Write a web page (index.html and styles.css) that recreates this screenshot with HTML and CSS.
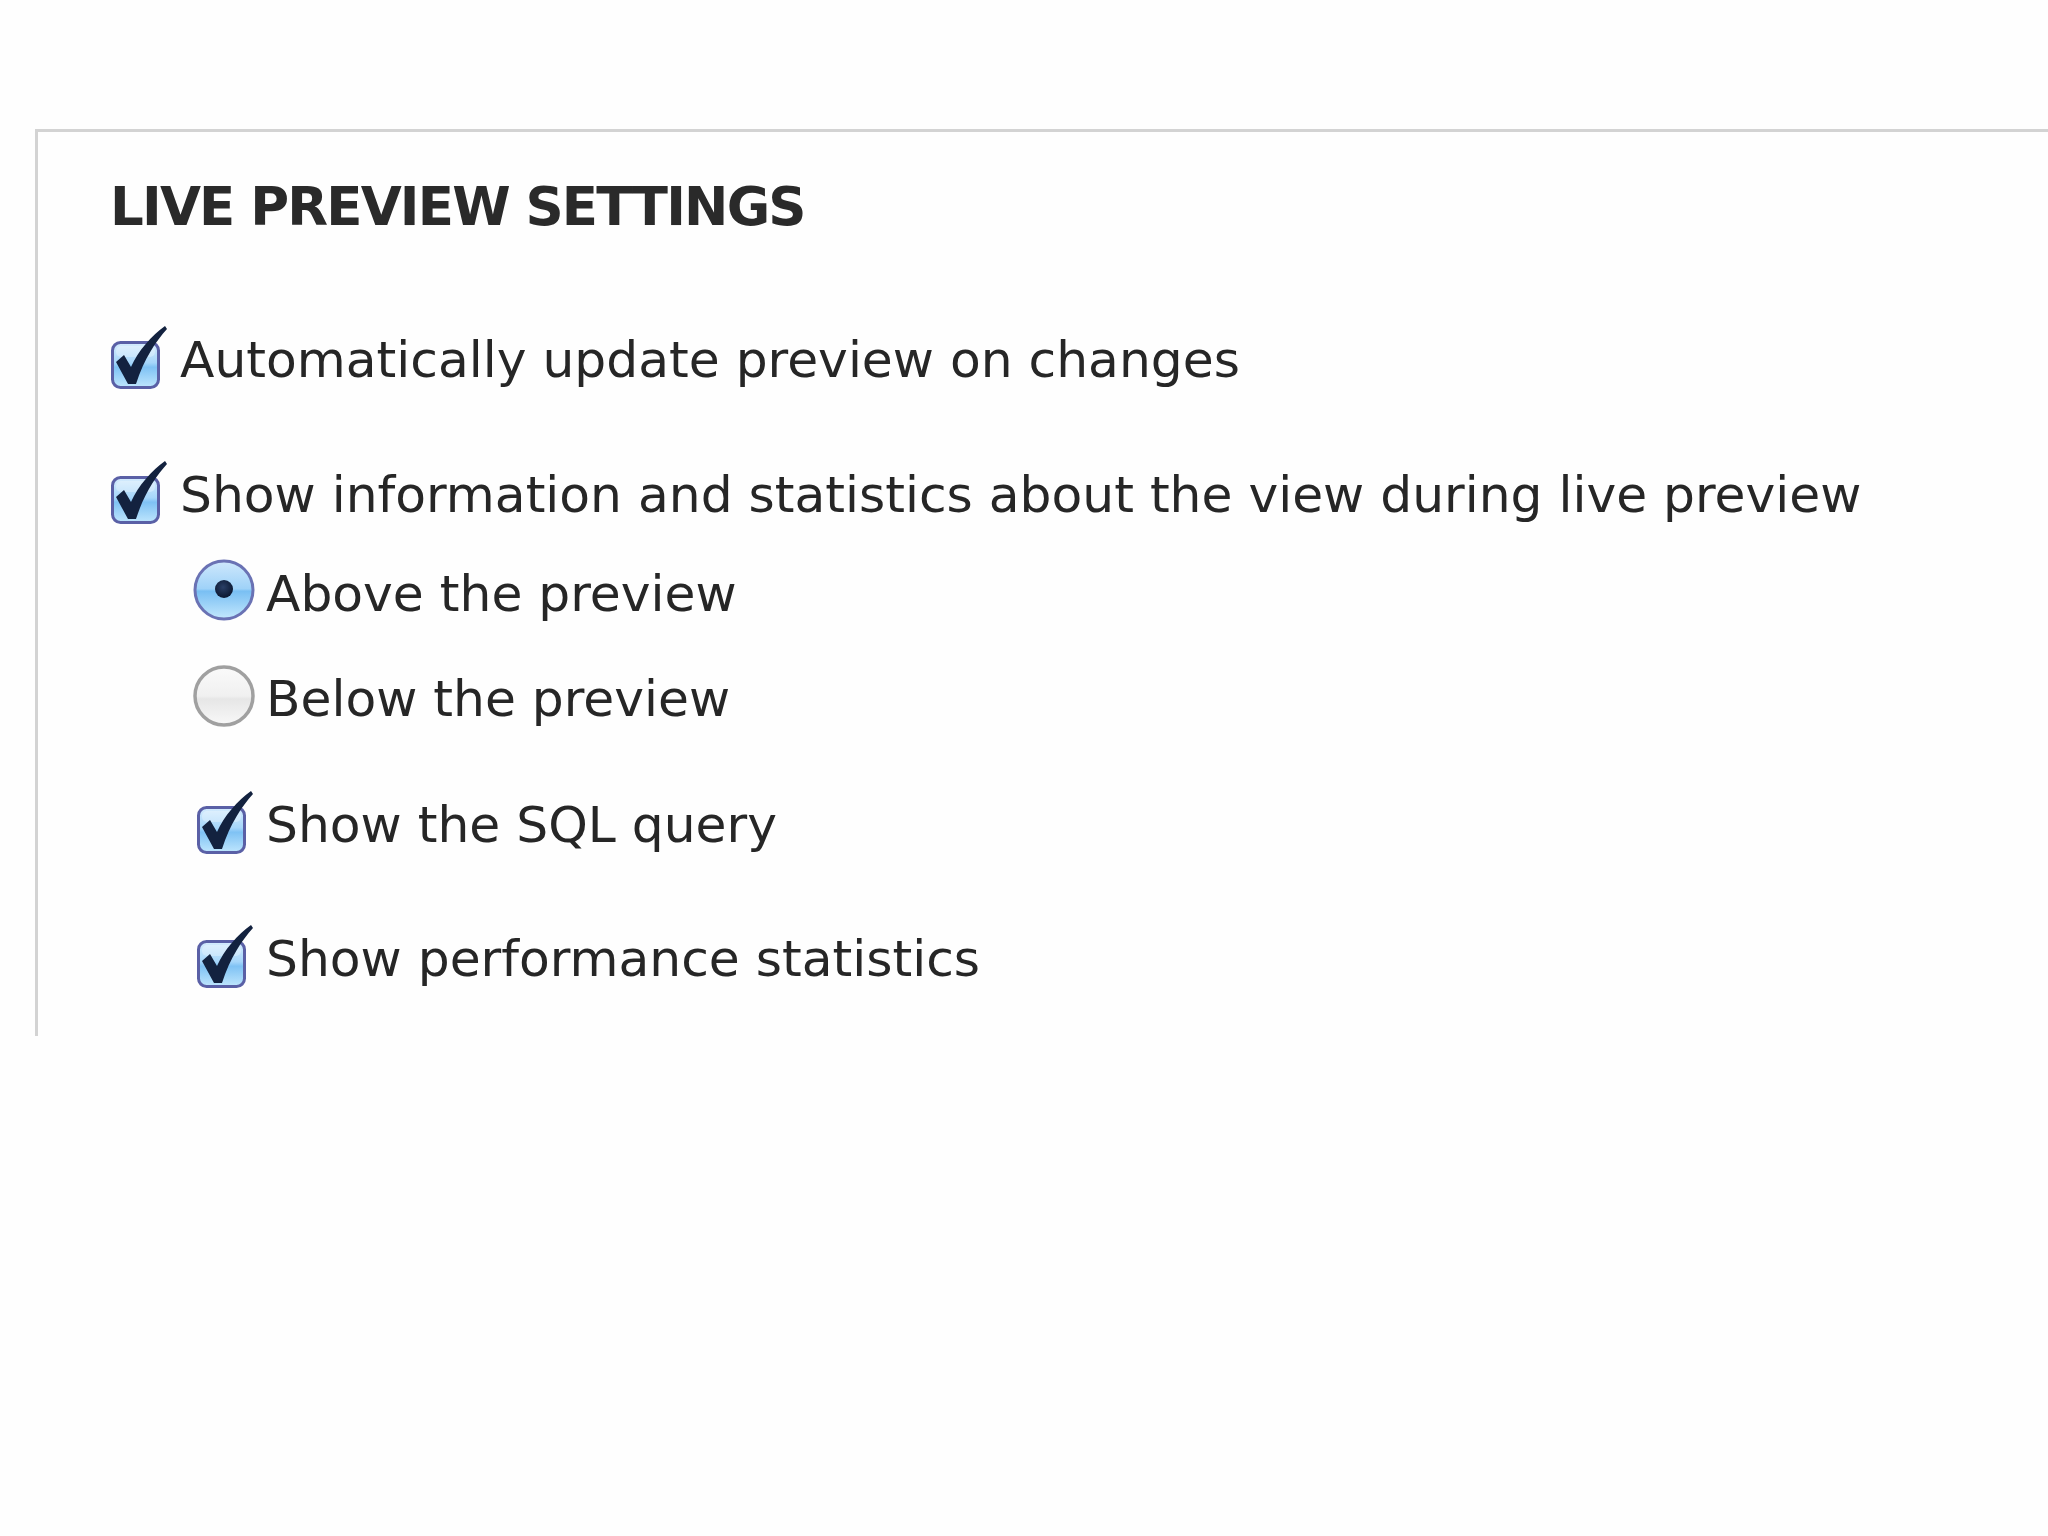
FILE: index.html
```html
<!DOCTYPE html>
<html lang="en">
<head>
<meta charset="utf-8">
<title>Live preview settings</title>
<link rel="stylesheet" href="styles.css">
</head>
<body>
<svg class="defs" width="0" height="0" aria-hidden="true">
  <defs>
    <linearGradient id="boxFill" x1="0" y1="0" x2="0" y2="1">
      <stop offset="0" stop-color="#d6ecfd"/>
      <stop offset="0.45" stop-color="#a6d6fa"/>
      <stop offset="0.55" stop-color="#7fc2f4"/>
      <stop offset="1" stop-color="#bfe6fd"/>
    </linearGradient>
    <linearGradient id="radioOn" x1="0" y1="0" x2="0" y2="1">
      <stop offset="0" stop-color="#cfe8fc"/>
      <stop offset="0.48" stop-color="#9fd2f8"/>
      <stop offset="0.52" stop-color="#79bff3"/>
      <stop offset="1" stop-color="#c4e8fd"/>
    </linearGradient>
    <linearGradient id="radioOff" x1="0" y1="0" x2="0" y2="1">
      <stop offset="0" stop-color="#fafafa"/>
      <stop offset="0.5" stop-color="#f0f0f0"/>
      <stop offset="0.55" stop-color="#e6e6e6"/>
      <stop offset="1" stop-color="#f8f8f8"/>
    </linearGradient>
    <radialGradient id="dot" cx="0.45" cy="0.4" r="0.6">
      <stop offset="0" stop-color="#2a3f66"/>
      <stop offset="1" stop-color="#0b1730"/>
    </radialGradient>
    <symbol id="chk" viewBox="0 0 58 64">
      <rect x="2.5" y="16.5" width="46" height="45" rx="8" fill="url(#boxFill)" stroke="#5a60a6" stroke-width="3"/>
      <rect x="6" y="20" width="39" height="11" rx="5" fill="#ffffff" opacity="0.3"/>
      <path d="M6,36 L14,29 L21,41 C28,25 42,9 55,0 L57,3 C46,15 34,33 26,58 L18,58 Z" fill="#13223f"/>
    </symbol>
    <symbol id="radOn" viewBox="0 0 64 64">
      <circle cx="32" cy="32" r="29" fill="url(#radioOn)" stroke="#6a72b4" stroke-width="3"/>
      <circle cx="32" cy="31" r="9" fill="url(#dot)"/>
    </symbol>
    <symbol id="radOff" viewBox="0 0 64 64">
      <circle cx="32" cy="33" r="29" fill="url(#radioOff)" stroke="#a0a0a0" stroke-width="3.5"/>
    </symbol>
  </defs>
</svg>

<div class="fieldset">
  <h2 class="legend">LIVE PREVIEW SETTINGS</h2>

  <div class="row item1">
    <svg class="check" width="58" height="64"><use href="#chk"/></svg>
    <span class="label">Automatically update preview on changes</span>
  </div>

  <div class="row item2">
    <svg class="check" width="58" height="64"><use href="#chk"/></svg>
    <span class="label">Show information and statistics about the view during live preview</span>
  </div>

  <div class="sub">
    <div class="row sub-row radio1">
      <svg class="radio" width="64" height="64"><use href="#radOn"/></svg>
      <span class="label">Above the preview</span>
    </div>
    <div class="row sub-row radio2">
      <svg class="radio" width="64" height="64"><use href="#radOff"/></svg>
      <span class="label">Below the preview</span>
    </div>
    <div class="row sub-row sql">
      <svg class="check sub-check" width="58" height="64"><use href="#chk"/></svg>
      <span class="label">Show the SQL query</span>
    </div>
    <div class="row sub-row perf">
      <svg class="check sub-check" width="58" height="64"><use href="#chk"/></svg>
      <span class="label">Show performance statistics</span>
    </div>
  </div>
</div>
</body>
</html>
```

FILE: styles.css
```css
html, body {
  margin: 0;
  padding: 0;
  overflow: hidden;
  background: #fefefe;
}

body {
  width: 2048px;
  height: 1536px;
  font-family: "DejaVu Sans", "Verdana", sans-serif;
  color: #262626;
}

.defs {
  position: absolute;
  width: 0;
  height: 0;
  overflow: hidden;
}

.fieldset {
  box-sizing: border-box;
  margin: 129px -40px 0 35px;
  height: 907px;
  border-top: 3px solid #d3d3d3;
  border-left: 3px solid #d3d3d3;
  padding: 45px 0 0 72px;
}

.legend {
  margin: 0;
  font-size: 53px;
  line-height: 60px;
  font-weight: bold;
  letter-spacing: -1.8px;
  color: #2a2a2a;
}

.row {
  display: flex;
  align-items: flex-start;
  font-size: 50.3px;
  line-height: 60px;
  white-space: nowrap;
}

.check {
  flex: none;
  margin-top: -4px;
  margin-right: 12px;
}

.radio {
  flex: none;
  margin-top: -6px;
  margin-right: 10px;
}

.sub-check {
  margin-left: 4px;
}

.item1 { margin-top: 93px; }
.item2 { margin-top: 75px; }

.sub {
  padding-left: 82px;
}

.radio1 { margin-top: 39px; }
.radio2 { margin-top: 45px; }
.sql { margin-top: 66px; }
.perf { margin-top: 74px; }
```
